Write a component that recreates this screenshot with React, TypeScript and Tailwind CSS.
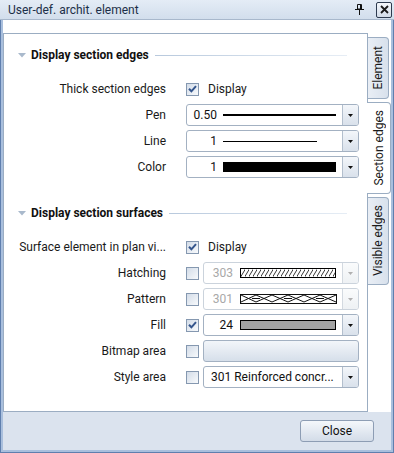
import type { ReactNode } from 'react';

const Check = ({ checked }: { checked?: boolean }) => (
    <div className="w-[13px] h-[13px] shrink-0 border border-[#8598b0] bg-linear-to-br from-[#d3dce8] to-[#f8fafc] flex items-center justify-center">
        {checked && (
            <svg width="9" height="8" viewBox="0 0 9 8">
                <path d="M1 3.8 L3.4 6.3 L8 1.2" stroke="#34558c" strokeWidth="2" fill="none" />
            </svg>
        )}
    </div>
);

const Combo = ({ children, disabled = false }: { children: ReactNode; disabled?: boolean }) => (
    <div
        className={`h-[22px] flex-1 min-w-0 flex rounded-[3px] border bg-white overflow-hidden ${disabled ? 'border-[#cbd3dc]' : 'border-[#a3b1c2]'}`}
    >
        <div className="flex-1 min-w-0 flex items-center">{children}</div>
        <div
            className={`w-[16px] shrink-0 flex items-center justify-center border-l bg-linear-to-b ${disabled ? 'border-[#d3d9e0] from-[#fafbfc] to-[#eef1f4]' : 'border-[#b3bfcd] from-[#f3f6fa] to-[#d9e1eb]'}`}
        >
            <svg width="5" height="3" viewBox="0 0 5 3">
                <path d="M0 0 H5 L2.5 3 Z" fill={disabled ? '#b0b0b0' : '#111'} />
            </svg>
        </div>
    </div>
);

const Num = ({ v, disabled = false, w = 'w-[30px]' }: { v: string; disabled?: boolean; w?: string }) => (
    <span className={`${w} shrink-0 text-right text-[12px] ${disabled ? 'text-[#a8a8a8]' : 'text-[#111]'}`}>{v}</span>
);

const Header = ({ title }: { title: string }) => (
    <div className="h-[20px] flex items-center pl-[14px] pr-[20px]">
        <svg width="8" height="5" viewBox="0 0 8 5" className="mr-[5px] shrink-0">
            <path d="M0 0 H8 L4 4.5 Z" fill="#a9b9cc" />
        </svg>
        <span className="text-[12px] font-bold text-[#111] whitespace-nowrap">{title}</span>
        <div className="flex-1 min-w-0 h-px ml-[6px] bg-linear-to-r from-[#b8c9dd] to-[#e6edf5]" />
    </div>
);

const Row = ({ label, children }: { label: string; children: ReactNode }) => (
    <div className="h-[26px] flex items-center">
        <div className="w-[162px] shrink-0 pl-[15px] text-right text-[12px] text-[#1a1a1a] whitespace-nowrap">{label}</div>
        <div className="flex-1 min-w-0 flex items-center ml-[20px] mr-[8px]">{children}</div>
    </div>
);

const Tab = ({ label, active = false, h }: { label: string; active?: boolean; h: string }) => (
    <div
        className={`${h} flex items-center justify-center rounded-r-[4px] border border-l-0 ${active ? 'bg-white border-[#9badc2] w-[24px] -ml-[1px]' : 'bg-linear-to-r from-[#e9eef5] to-[#d8e1ec] border-[#9badc2] w-[21px]'}`}
    >
        <span className="[writing-mode:vertical-rl] rotate-180 text-[12px] text-[#1a1a1a] whitespace-nowrap">{label}</span>
    </div>
);

export default function App() {
    return (
        <div className="w-[394px] h-[453px] border border-[#5f7fae] bg-[#a9bfdd] font-['Segoe_UI',Roboto,sans-serif] flex flex-col">
            {/* title bar */}
            <div className="h-[20px] -mx-px -mt-px flex items-center pl-[8px] pr-[2px] bg-linear-to-b from-[#e4ecf6] to-[#d2deec] border-b border-[#a8b8cc]">
                <span className="flex-1 text-[12px] text-[#1c2f48]">User-def. archit. element</span>
                <svg width="9" height="11" viewBox="0 0 9 11" className="mr-[12px]">
                    <path d="M2.5 0.5 H6.5 V5 H2.5 Z" fill="none" stroke="#111" strokeWidth="1" />
                    <path d="M5.5 1 V5" stroke="#111" strokeWidth="1" />
                    <path d="M0 5.5 H9" stroke="#111" strokeWidth="1" />
                    <path d="M4.5 5.5 V11" stroke="#111" strokeWidth="1" />
                </svg>
                <div className="w-[16px] h-[16px] rounded-[2px] border border-[#2d3b4f] bg-linear-to-b from-[#f4f7fb] to-[#d3dce8] flex items-center justify-center">
                    <svg width="9" height="9" viewBox="0 0 9 9">
                        <path d="M1 1 L8 8 M8 1 L1 8" stroke="#1a1a1a" strokeWidth="1.8" />
                    </svg>
                </div>
            </div>

            <div className="flex-1 flex flex-col mx-[2px] mb-[2px]">
                {/* content */}
                <div className="h-[392px] bg-white flex">
                    <div className="flex-1 min-w-0 mt-[13px] border border-[#9badc2] flex flex-col">
                        <div className="h-[11px]" />
                        <Header title="Display section edges" />
                        <div className="h-[11px]" />
                        <Row label="Thick section edges">
                            <Check checked />
                            <span className="ml-[9px] text-[12px] text-[#1a1a1a]">Display</span>
                        </Row>
                        <Row label="Pen">
                            <Combo>
                                <Num v="0.50" />
                                <div className="flex-1 ml-[6px] mr-[6px] h-[2px] bg-black" />
                            </Combo>
                        </Row>
                        <Row label="Line">
                            <Combo>
                                <Num v="1" />
                                <div className="flex-1 flex ml-[6px] mr-[6px]">
                                    <div className="w-[94px] h-px bg-black" />
                                </div>
                            </Combo>
                        </Row>
                        <Row label="Color">
                            <Combo>
                                <Num v="1" />
                                <div className="flex-1 ml-[6px] mr-[6px] h-[10px] bg-black" />
                            </Combo>
                        </Row>

                        <div className="h-[23px]" />
                        <Header title="Display section surfaces" />
                        <div className="h-[11px]" />
                        <Row label="Surface element in plan vi...">
                            <Check checked />
                            <span className="ml-[9px] text-[12px] text-[#1a1a1a]">Display</span>
                        </Row>
                        <Row label="Hatching">
                            <Check />
                            <div className="flex-1 min-w-0 flex ml-[4px]">
                                <Combo disabled>
                                    <Num v="303" disabled w="w-[29px]" />
                                    <div className="flex-1 min-w-0 ml-[7px] mr-[6px] h-[10px] border border-black overflow-hidden">
                                        <svg width="100%" height="8" className="block">
                                            <defs>
                                                <pattern id="hatch" width="4" height="8" patternUnits="userSpaceOnUse">
                                                    <path d="M-1 9 L5 -1" stroke="#222" strokeWidth="0.9" />
                                                </pattern>
                                            </defs>
                                            <rect x="0" y="0" width="100%" height="8" fill="url(#hatch)" />
                                        </svg>
                                    </div>
                                </Combo>
                            </div>
                        </Row>
                        <Row label="Pattern">
                            <Check />
                            <div className="flex-1 min-w-0 flex ml-[4px]">
                                <Combo disabled>
                                    <Num v="301" disabled w="w-[29px]" />
                                    <svg className="ml-[7px] mr-[6px] shrink-0" width="97" height="10" viewBox="0 0 97 10">
                                        <rect x="0.5" y="0.5" width="96" height="9" fill="white" stroke="#111" />
                                        <path d="M1 1 L16 8 L32 1 L48 8 L64 1 L80 8 L96 1" stroke="#111" fill="none" strokeWidth="1" />
                                        <path d="M1 8 L16 1 L32 8 L48 1 L64 8 L80 1 L96 8" stroke="#111" fill="none" strokeWidth="1" />
                                        <path d="M12 4.5 H20 M44 4.5 H52 M76 4.5 H84" stroke="#111" strokeWidth="1.2" />
                                    </svg>
                                </Combo>
                            </div>
                        </Row>
                        <Row label="Fill">
                            <Check checked />
                            <div className="flex-1 min-w-0 flex ml-[4px]">
                                <Combo>
                                    <Num v="24" w="w-[29px]" />
                                    <div className="flex-1 ml-[7px] mr-[6px] h-[10px] bg-[#a3a3a3] border border-black" />
                                </Combo>
                            </div>
                        </Row>
                        <Row label="Bitmap area">
                            <Check />
                            <div className="flex-1 min-w-0 ml-[4px] h-[22px] rounded-[3px] border border-[#a3b1c2] bg-linear-to-b from-[#f3f6fa] to-[#d6dfea]" />
                        </Row>
                        <Row label="Style area">
                            <Check />
                            <div className="flex-1 min-w-0 flex ml-[4px]">
                                <Combo>
                                    <span className="pl-[7px] text-[12px] text-[#111] whitespace-nowrap">301 Reinforced concr...</span>
                                </Combo>
                            </div>
                        </Row>
                    </div>

                    {/* tabs */}
                    <div className="w-[23px] shrink-0 pt-[17px] flex flex-col gap-[3px]">
                        <Tab label="Element" h="h-[62px]" />
                        <Tab label="Section edges" h="h-[92px]" active />
                        <Tab label="Visible edges" h="h-[88px]" />
                    </div>
                </div>

                {/* footer */}
                <div className="flex-1 bg-[#dbe3ee] flex justify-end items-start pt-[8px] pr-[17px]">
                    <button className="w-[74px] h-[22px] rounded-[3px] border border-[#8d9db4] bg-linear-to-b from-[#f4f7fb] to-[#d3dce8] text-[12px] text-[#111]">
                        Close
                    </button>
                </div>
            </div>
        </div>
    );
}
